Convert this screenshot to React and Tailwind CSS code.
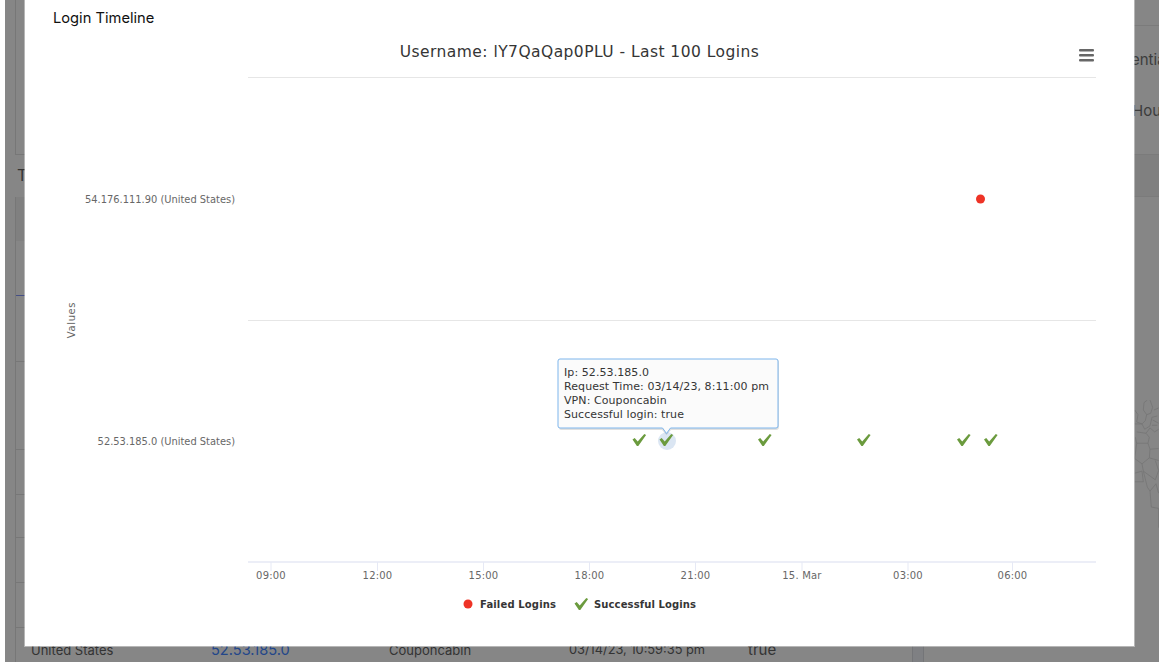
const ticks = [
  { x: 271, label: '09:00' },
  { x: 377.5, label: '12:00' },
  { x: 483.5, label: '15:00' },
  { x: 589.5, label: '18:00' },
  { x: 695.5, label: '21:00' },
  { x: 802, label: '15. Mar' },
  { x: 908, label: '03:00' },
  { x: 1012.5, label: '06:00' },
];

const checks = [639.5, 666.5, 765, 864, 964, 991];

const tooltipLines = [
  'Ip: 52.53.185.0',
  'Request Time: 03/14/23, 8:11:00 pm',
  'VPN: Couponcabin',
  'Successful login: true',
];

// traced from the world map sliver on the right of the page
const mapLines = [
  'M42 8 L52 0 M42 8 L40 30 L50 44 L62 40 L68 22 L60 0',
  'M14 30 L24 44 L20 66 L36 72 L46 62 L50 44',
  'M14 72 L36 72 L44 88 L60 78 L66 52 L82 48',
  'M20 96 L48 100 L60 84 L74 96 L86 88',
  'M16 112 L20 130 L54 130 L58 112 L48 100',
  'M54 130 L60 148 L86 146',
  'M20 130 L14 176 L36 192 L58 174 L60 148',
  'M58 174 L86 182',
  'M36 192 L40 214 L76 240 L86 212 L76 182',
  'M14 220 L36 214 L40 246 L14 246',
  'M40 214 L52 262 L60 274 L78 252',
  'M60 274 L64 322 L86 326',
  'M78 252 L86 280 M86 326 L86 384',
  'M68 60 L86 70 M72 30 L86 24 M66 76 L82 76',
];

function Check({ x, y }) {
  return (
    <path
      transform={`translate(${x} ${y})`}
      d="M-7 -0.5 L-4.8 -2 L-1.8 1.6 L4.8 -6 L6.6 -5 L-1.2 6 L-2.6 6 Z"
      fill="#6a9a3c"
    />
  );
}

function Chart() {
  return (
    <svg
      viewBox="25 28 1109 618"
      className="block w-full flex-1 opacity-[0.99] font-['DejaVu_Sans',sans-serif]"
    >
      <text x="579.5" y="57" textAnchor="middle" fontSize="15.5" fill="#333333" letterSpacing="0.45">
        Username: lY7QaQap0PLU - Last 100 Logins
      </text>

      <g fill="#666666">
        <rect x="1079" y="49" width="15" height="2.4" rx="1" />
        <rect x="1079" y="54" width="15" height="2.4" rx="1" />
        <rect x="1079" y="59" width="15" height="2.4" rx="1" />
      </g>

      <line x1="248" x2="1096" y1="77.5" y2="77.5" stroke="#e6e6e6" />
      <line x1="248" x2="1096" y1="320.5" y2="320.5" stroke="#e6e6e6" />
      <line x1="248" x2="1096" y1="562" y2="562" stroke="#e6e9f5" strokeWidth="1.5" />

      <text
        transform="translate(75 320) rotate(-90)"
        textAnchor="middle"
        fontSize="10"
        fill="#666666"
        letterSpacing="0.6"
      >
        Values
      </text>
      <text x="235" y="203" textAnchor="end" fontSize="9.9" fill="#666666">
        54.176.111.90 (United States)
      </text>
      <text x="235" y="445" textAnchor="end" fontSize="9.9" fill="#666666">
        52.53.185.0 (United States)
      </text>

      {ticks.map((t) => (
        <g key={t.label}>
          <line x1={t.x} x2={t.x} y1="562" y2="571" stroke="#e6e9f5" />
          <text x={t.x} y="579" textAnchor="middle" fontSize="10" fill="#666666" letterSpacing="0.2">
            {t.label}
          </text>
        </g>
      ))}

      <circle cx="980.5" cy="199" r="4.5" fill="#ee3124" />

      <circle cx="667" cy="441" r="9" fill="#dbe6f3" />
      {checks.map((x) => (
        <Check key={x} x={x} y={440} />
      ))}

      <path
        d="M561 360 H778 Q779 360 779 363 V427 Q779 430 776 430 H671 L666.5 435 L662 430 H561 Q559 430 559 427 V363 Q559 360 561 360 Z"
        fill="#000000"
        fillOpacity="0.12"
      />
      <path
        d="M560 359 H776 Q778 359 778 361 V426 Q778 428 776 428 H670.5 L666.5 433.5 L662.5 428 H560 Q558 428 558 426 V361 Q558 359 560 359 Z"
        fill="#fbfbfb"
        stroke="#7cb5ec"
      />
      {tooltipLines.map((line, i) => (
        <text key={line} x="564" y={376 + i * 14} fontSize="11" fill="#333333" letterSpacing="0.08">
          {line}
        </text>
      ))}

      <circle cx="468" cy="604" r="4.5" fill="#ee3124" />
      <text x="480" y="608" fontSize="10" fontWeight="700" fill="#333333" letterSpacing="0.15">
        Failed Logins
      </text>
      <Check x={581.5} y={604} />
      <text x="594" y="608" fontSize="10" fontWeight="700" fill="#333333" letterSpacing="0.12">
        Successful Logins
      </text>
    </svg>
  );
}

export default function App() {
  return (
    <div className="w-[1174px] h-[672px] bg-white pl-[5px] pb-[10px] font-['Inter',sans-serif]">
      <div className="relative w-[1154px] h-[662px] bg-[#868686] flex overflow-hidden">
        {/* page behind the modal, left edge */}
        <div className="w-5 shrink-0 flex flex-col pl-[10px] text-[#333333]">
          <div className="h-[155px] border-l border-b border-[#777777]" />
          <div className="h-[42px] flex items-center">
            <span className="text-[16px] leading-none ml-[2px] -mt-[2px]">T</span>
          </div>
          <div className="flex-1 border-l border-[#777777] flex flex-col">
            <div className="h-[44px] bg-[#808080]" />
            <div className="h-[55px] border-b border-[#454f85]" />
            <div className="h-[66px] border-b border-[#777777]" />
            <div className="h-[88px] border-b border-[#777777]" />
            <div className="h-[45px] border-b border-[#777777]" />
            <div className="h-[43px] border-b border-[#777777]" />
            <div className="h-[45px] border-b border-[#777777]" />
            <div className="h-[45px] border-b border-[#777777]" />
          </div>
        </div>

        {/* page behind the modal, last table row */}
        <div className="flex-1 flex flex-col justify-end">
          <div className="h-[16px] flex items-stretch text-[13px] leading-none text-[#333333] whitespace-nowrap">
            <span className="w-[186px] pl-[6px] -mt-[5px] pt-[3px]">United States</span>
            <span className="w-[178px] text-[14.6px] text-[#23468a] -mt-[5px] pt-[2px]">52.53.185.0</span>
            <span className="w-[180px] -mt-[5px] pt-[3px]">Couponcabin</span>
            <span className="w-[179px] text-[12.8px] -mt-[5px] pt-[3px]">03/14/23, 10:59:35 pm</span>
            <span className="w-[164px] text-[15px] -mt-[6px] pt-[2px]">true</span>
            <span className="w-[12px] bg-[#7f8083] border-x border-[#747578]" />
          </div>
        </div>

        {/* page behind the modal, right edge */}
        <div className="w-[25px] shrink-0 flex flex-col text-[#3c3c3c] text-[15px] overflow-hidden whitespace-nowrap">
          <div className="h-[26px] border-b border-[#7b7b7b]" />
          <div className="h-[69px] flex items-center">
            <span className="-ml-[3px]">entia</span>
          </div>
          <div className="h-[29px] flex items-center pt-[3px]">
            <span className="-ml-[2px]">Hou</span>
          </div>
          <div className="h-[31px] border-b border-[#7b7b7b]" />
          <div className="h-[42px] bg-[#808080] border-b border-[#7b7b7b]" />
          <div className="h-[203px]" />
          <svg viewBox="12 0 75 400" className="w-[25px] h-[133px] shrink-0" fill="none" stroke="#757575" strokeWidth="2.4">
            {mapLines.map((d) => (
              <path key={d} d={d} />
            ))}
          </svg>
        </div>

        {/* modal */}
        <div className="absolute left-5 top-0 w-[1109px] h-[646px] bg-white flex flex-col shadow-[0_0_0_1px_rgba(255,255,255,0.4)]">
          <div className="h-[28px] pl-7 pt-[9px] text-[14.7px] leading-[18px] text-[#111111]">
            Login Timeline
          </div>
          <Chart />
        </div>
      </div>
    </div>
  );
}
